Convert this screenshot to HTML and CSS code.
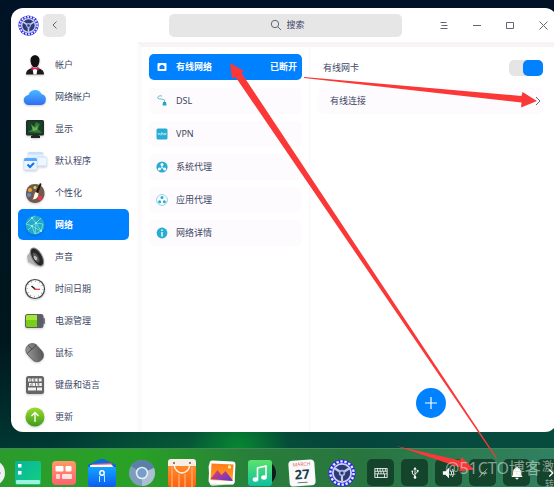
FILE: index.html
```html
<!DOCTYPE html>
<html lang="zh-CN">
<head>
<meta charset="utf-8">
<meta name="viewport" content="width=device-width, initial-scale=1">
<title>控制中心</title>
<link rel="stylesheet" href="styles.css">
</head>
<body>
<svg class="defs" aria-hidden="true">
  <defs>
    <linearGradient id="cloud" x1="0" y1="0" x2="0" y2="1"><stop offset="0" stop-color="#49b9ff"/><stop offset="1" stop-color="#2f6df5"/></linearGradient>
    <linearGradient id="grey" x1="0" y1="0" x2="1" y2="1"><stop offset="0" stop-color="#a2a2a2"/><stop offset="1" stop-color="#4c4c4c"/></linearGradient>
    <linearGradient id="lime" x1="0" y1="0" x2="0" y2="1"><stop offset="0" stop-color="#9bdc2c"/><stop offset="1" stop-color="#3f9a1c"/></linearGradient>
    <linearGradient id="teal" x1="0" y1="0" x2="1" y2="1"><stop offset="0" stop-color="#08b3a0"/><stop offset="1" stop-color="#14d07c"/></linearGradient>
    <linearGradient id="coral" x1="0" y1="0" x2="0" y2="1"><stop offset="0" stop-color="#ff9a68"/><stop offset="1" stop-color="#ff6170"/></linearGradient>
    <linearGradient id="folder" x1="0" y1="0" x2="0" y2="1"><stop offset="0" stop-color="#12a4ff"/><stop offset="1" stop-color="#0a5cf0"/></linearGradient>
    <linearGradient id="music" x1="0" y1="0" x2="0" y2="1"><stop offset="0" stop-color="#5be36a"/><stop offset="1" stop-color="#10bfa0"/></linearGradient>
    <linearGradient id="sunset" x1="0" y1="0" x2="0" y2="1"><stop offset="0" stop-color="#ff7a1c"/><stop offset="1" stop-color="#ffa321"/></linearGradient>
    <linearGradient id="hills" x1="0" y1="0" x2="1" y2="1"><stop offset="0" stop-color="#f03d62"/><stop offset="1" stop-color="#5a35d8"/></linearGradient>
    <linearGradient id="bag" x1="0" y1="0" x2="0" y2="1"><stop offset="0" stop-color="#ff8a2a"/><stop offset="1" stop-color="#fb6312"/></linearGradient>
    <symbol id="gear" viewBox="0 0 28 28">
      <circle cx="14" cy="14" r="13.5" fill="#2a27e0"/>
      <circle cx="14" cy="14" r="11.6" fill="none" stroke="#e6e8ff" stroke-width="2.4" stroke-dasharray="2.4 1.65"/>
      <circle cx="14" cy="14" r="10" fill="#cfd4ee"/>
      <circle cx="14" cy="14" r="8.2" fill="#2c3a78"/>
      <path d="M14 14L7 9.500M14 14l7-4.500M14 14v8.500" stroke="#c4cbea" stroke-width="2.200"/>
      <circle cx="14" cy="14" r="3.200" fill="#aab4dd"/>
      <circle cx="14" cy="14" r="1.600" fill="#27336c"/>
    </symbol>
  </defs>
</svg>

<main class="window">
  <header class="titlebar">
    <div class="brand">
      <svg class="brand-logo" aria-hidden="true"><use href="#gear"/></svg>
      <button class="back" type="button" aria-label="返回"><svg width="12" height="12" viewBox="0 0 12 12"><path class="line" d="M7.500 2.500L4 6l3.500 3.500"/></svg></button>
    </div>
    <label class="search">
      <svg width="12" height="12" viewBox="0 0 12 12" aria-hidden="true"><circle class="line" cx="5" cy="5" r="3.700"/><path class="line" d="M7.700 7.700L11 11"/></svg>
      <input type="search" placeholder="搜索" aria-label="搜索">
    </label>
    <div class="controls">
      <button type="button" aria-label="菜单"><svg width="12" height="12" viewBox="0 0 12 12"><path class="line" d="M2.500 3.500h6M3.500 6.500h6M2.500 9.500h7"/></svg></button>
      <button type="button" aria-label="最小化"><svg width="12" height="12" viewBox="0 0 12 12"><path class="line" d="M2 6.500h8"/></svg></button>
      <button type="button" aria-label="最大化"><svg width="12" height="12" viewBox="0 0 12 12"><path class="line" d="M2.500 3.500h7v6h-7z"/></svg></button>
      <button type="button" aria-label="关闭"><svg width="12" height="12" viewBox="0 0 12 12"><path class="line" d="M2.500 2.500l8 8M10.500 2.500l-8 8"/></svg></button>
    </div>
  </header>

  <div class="content">
    <nav class="sidebar" aria-label="设置">
      <a href="#account"><svg viewBox="0 0 24 24"><path d="M3 21.500c0-5 4-6.500 9-6.500s9 1.500 9 6.500z" fill="#1b1b1d"/><path d="M9.500 15.500h5L13.500 21.500h-3z" fill="#fff"/><path d="M8.500 13.500l3.500 2 3.500-2v4L12 16l-3.500 1.500z" fill="#e01d5c"/><path d="M7.500 7c0-6.500 9-6.500 9 0 0 4-2 7.500-4.500 7.500S7.500 11 7.500 7z" fill="#111"/></svg>帐户</a>
      <a href="#cloud-account"><svg viewBox="0 0 24 24"><path d="M6 20a5 5 0 0 1-.500-10A7 7 0 0 1 18.500 9 5.600 5.600 0 0 1 18 20z" fill="url(#cloud)"/></svg>网络帐户</a>
      <a href="#display"><svg viewBox="0 0 24 24"><path d="M8 21h9v-2l-2-1h-5l-2 1z" fill="#222"/><rect x="3" y="3" width="18" height="15.500" rx="1.500" fill="#222c26"/><rect x="4.500" y="4.500" width="15" height="12.500" fill="#17422a"/><path d="M5 15C9 13 11 10 13 5l4 2-2 5 4 4z" fill="#2f7a36"/><path d="M8 7l4 4 3-3-1 5-4 1z" fill="#8dc65a" opacity=".7"/></svg>显示</a>
      <a href="#default-apps"><svg viewBox="0 0 24 24"><rect x="5" y="3" width="15" height="11" rx="1.500" fill="#e3f0ff"/><path d="M5 5.500V4q0-1 1-1h13q1 0 1 1v1.500z" fill="#c7e0fc"/><rect x="14" y="8" width="10" height="9" rx="1.500" fill="#eef6ff" stroke="#c7e0fc"/><rect x="1" y="9" width="13" height="12" rx="1.500" fill="#e9f4ff" stroke="#c4dffc" stroke-width=".6"/><path d="M1 12v-1.500Q1 9 2.500 9h10Q14 9 14 10.500V12z" fill="#55a8fb"/><path d="M4.500 15.500l2.500 2.500 4-4" fill="none" stroke="#1473e8" stroke-width="2"/></svg>默认程序</a>
      <a href="#personal"><svg viewBox="0 0 24 24"><path d="M12 3c6 0 9.500 4 9.500 9.500S17 22 12 22s-9.500-4-9-10C3.500 6 7 3 12 3z" fill="#745849"/><circle cx="7" cy="9" r="2" fill="#efa332"/><circle cx="6" cy="14" r="2" fill="#4897df"/><circle cx="17" cy="17" r="2.300" fill="#e83848"/><circle cx="12" cy="6.500" r="1.500" fill="#d0dc61"/><path d="M17 2l1.500 1L15 12l-2-1z" fill="#181512"/><path d="M12.500 11l3 1.500c0 3-2 6-6 6 2-2 1-5 3-7.500z" fill="#fff8ee"/></svg>个性化</a>
      <a class="selected" href="#network" aria-current="page"><svg viewBox="0 0 24 24"><circle cx="12" cy="12" r="9.500" fill="#25a8cd"/><path d="M3 11l6-6 4 5 5-5M3 11l6 2 4-3 7 1M5 17l4-4 3 8 1-11 5 8-9-5M12 3L9 5M20 11l-2 7-6 3" fill="none" stroke="#7ee6d6" stroke-width=".8"/><g fill="#a9f6e6"><circle cx="9" cy="5" r="1"/><circle cx="9" cy="13" r="1"/><circle cx="13" cy="10" r="1"/><circle cx="18" cy="18" r="1"/></g></svg>网络</a>
      <a href="#sound"><svg viewBox="0 0 24 24"><path d="M4 11l6-8 9 17-6 1-8-4z" fill="#b3b3b3"/><ellipse cx="14" cy="12" rx="5" ry="10" transform="rotate(-30 14 12)" fill="#262626" stroke="#888"/><ellipse cx="13" cy="12.500" rx="2.500" ry="5.500" transform="rotate(-30 13 12.500)" fill="#555"/><ellipse cx="12.500" cy="13" rx="1.500" ry="2.500" transform="rotate(-30 12.500 13)" fill="#bbb"/></svg>声音</a>
      <a href="#time"><svg viewBox="0 0 24 24"><circle cx="12" cy="12" r="9.500" fill="#fcfcfc" stroke="#444" stroke-width="1.200"/><circle cx="12" cy="12" r="7.700" fill="none" stroke="#777" stroke-width="1.300" stroke-dasharray=".6 3.430"/><path d="M12 12L8.500 9M12 12l-1-1" stroke="#222" stroke-width="1.600"/><path d="M11 12.300h6" stroke="#e33532" stroke-width="1.200"/></svg>时间日期</a>
      <a href="#power"><svg viewBox="0 0 24 24"><rect x="19" y="9" width="3" height="6" rx="1" fill="#777"/><rect x="2" y="5" width="18.500" height="14" rx="2.500" fill="#595f62"/><path d="M4.500 6H14v12H4.500Q3 18 3 16.500v-9Q3 6 4.500 6z" fill="#79cf16"/><path d="M4.500 6H14v5H3V7.500Q3 6 4.500 6z" fill="#a3e638"/></svg>电源管理</a>
      <a href="#mouse"><svg viewBox="0 0 24 24"><rect x="5.500" y="1.500" width="13" height="20" rx="6.500" transform="rotate(-42 12 12)" fill="url(#grey)" stroke="#555" stroke-width=".7"/><path d="M4 12.500l9.500-8.500M5.500 4.500l3.500 4" stroke="#3f3f3f" stroke-width=".8"/></svg>鼠标</a>
      <a href="#keyboard"><svg viewBox="0 0 24 24"><rect x="3" y="3" width="18" height="18" rx="2.500" fill="#666"/><g fill="none" stroke="#f2f2f2" stroke-width="3"><path d="M5 7h14" stroke-dasharray="2.800 .8"/><path d="M6 11.500h13" stroke-dasharray="2.600 .8"/><path d="M5 16h8m1 0h5"/></g><path d="M6 7h1M10 7h1M14 7h1M7 12h1M14 11h1" stroke="#777"/></svg>键盘和语言</a>
      <a href="#update"><svg viewBox="0 0 24 24"><circle cx="12" cy="12" r="9.500" fill="url(#lime)"/><path d="M12 17V7.500M8.500 11L12 7.500l3.500 3.500" fill="none" stroke="#fff" stroke-width="1.300"/></svg>更新</a>
    </nav>

    <div class="panels">
      <nav class="network-list" aria-label="网络">
        <a class="selected" href="#wired" aria-current="page"><svg viewBox="0 0 12 12"><rect x="1.500" y="2" width="9" height="8" rx="1" fill="#fff"/><path d="M3.500 8V5.500q0-.500 .5-.5h.5V4h3v1h.5q.5 0 .5 .5V8z" fill="#0081ff"/></svg>有线网络<span class="state">已断开</span></a>
        <a href="#dsl"><svg viewBox="0 0 12 12"><path d="M6 1C3 0 .5 2.500 2 3.500S7 3.500 8.500 5v2" fill="none" stroke="#62bfcd"/><path d="M7 7h3l.5 3.500h-4z" fill="#21a5c1"/></svg>DSL</a>
        <a href="#vpn"><svg viewBox="0 0 12 12"><rect x=".5" y=".5" width="11" height="11" rx="1.500" fill="#27acd2"/><path d="M2 5l.8 2L3.600 5M5 7.500V5h1.500v1.200H5M8 7.500V5l1.800 2V4.800" fill="none" stroke="#d9f6ff" stroke-width=".7"/></svg>VPN</a>
        <a href="#system-proxy"><svg viewBox="0 0 12 12"><circle cx="6" cy="6" r="5.600" fill="#27acd2"/><path d="M6 4v2.500L3.500 8M6 6.500L8.500 8" stroke="#fff" fill="none"/><g fill="#fff"><circle cx="6" cy="3.500" r="1.500"/><circle cx="3.300" cy="8" r="1.500"/><circle cx="8.700" cy="8" r="1.500"/></g></svg>系统代理</a>
        <a href="#app-proxy"><svg viewBox="0 0 12 12"><circle cx="6" cy="6" r="5.400" fill="#fff" stroke="#70c8df" stroke-width=".8"/><g fill="#27acd2"><circle cx="6" cy="3.600" r="1.500"/><circle cx="3.600" cy="7.800" r="1.500"/><circle cx="8.400" cy="7.800" r="1.500"/></g></svg>应用代理</a>
        <a href="#details"><svg viewBox="0 0 12 12"><circle cx="6" cy="6" r="5.400" fill="#27acd2"/><path d="M6 2.500v1.500M6 5v4.500" stroke="#fff" stroke-width="1.400"/></svg>网络详情</a>
      </nav>

      <section class="detail">
        <div class="adapter">
          <label for="wired-toggle">有线网卡</label>
          <input class="toggle" id="wired-toggle" type="checkbox" role="switch" checked>
        </div>
        <a class="connection" href="#connection">有线连接<svg width="10" height="12" viewBox="0 0 10 12"><path class="line" d="M3 2L7 6 3 10"/></svg></a>
        <button class="add" type="button" aria-label="添加"><svg width="14" height="14" viewBox="0 0 14 14"><path d="M7 1v12M1 7h12" stroke="#fff" stroke-width="1.200"/></svg></button>
      </section>
    </div>
  </div>
</main>

<footer class="dock">
  <div class="dock-group compact">
    <button type="button" aria-label="启动器"><svg viewBox="0 0 28 28"><circle cx="14" cy="14" r="13" fill="#eef0f2"/><circle cx="21" cy="14" r="1.500" fill="#777"/></svg></button>
    <button type="button" aria-label="桌面"><svg viewBox="0 0 28 28"><rect x="1" y="2" width="26" height="24" rx="2" fill="url(#teal)"/><path d="M4 5h3.500v3.500H4zM4 12h3.500v3.500H4z" fill="#fff"/><rect x="2" y="21" width="24" height="4" rx="1" fill="#9cf1df"/></svg></button>
    <button type="button" aria-label="多任务视图"><svg viewBox="0 0 28 28"><rect x="2" y="2" width="24" height="24" rx="4" fill="url(#coral)"/><g fill="#fff"><rect x="5.500" y="7" width="8" height="5.500" rx="1"/><rect x="15.500" y="7" width="6" height="5.500" rx="1"/><rect x="6" y="15" width="4" height="5" rx="1" opacity=".7"/><rect x="12" y="15" width="10" height="5" rx="1" opacity=".8"/></g></svg></button>
  </div>
  <i class="divider"></i>
  <div class="dock-group">
    <button type="button" aria-label="文件管理器"><svg viewBox="0 0 28 28"><path d="M0 6L12 0q2-1 4 0l12 6v4H0z" fill="#096bd9"/><path d="M4 5l19-1 3 4H4z" fill="#f35b72"/><path d="M2 7q0-1 1-1l20-.500q1 0 2 2.500H2z" fill="#f8fbff"/><path d="M0 8h28v17q0 3-3 3H3q-3 0-3-3z" fill="url(#folder)"/><circle cx="14" cy="14" r="2.200" fill="none" stroke="#fff" stroke-width="1.500"/><path d="M11.500 17v6M16.500 16v7" stroke="#c8e5ff" stroke-width="1"/></svg></button>
    <button type="button" aria-label="浏览器"><svg viewBox="0 0 28 28"><circle cx="14" cy="14" r="13" fill="#7e9dbb"/><path d="M14 14L3 7a13 13 0 0 1 23 2z" fill="#5b7fa8"/><path d="M14 14l12-5a13 13 0 0 1-12 18z" fill="#a9c1d3"/><circle cx="14" cy="14" r="6.300" fill="#e3edf5"/><circle cx="14" cy="14" r="4.700" fill="#789dc9"/></svg></button>
    <button type="button" aria-label="应用商店"><svg viewBox="0 0 28 28"><path d="M0 3q0-3 3-3h22q3 0 3 3v6H0z" fill="#f8eee5"/><path d="M0 7h28v18q0 3-3 3H3q-3 0-3-3z" fill="url(#bag)"/><path d="M4 8v20M11 15v13M17 15v13M24 8v20" stroke="#ffa565" stroke-width="1.500"/><path d="M6 5c1 12 15 12 16 0" fill="none" stroke="#fff3df" stroke-width="1.500"/><path d="M5 4h2M21 4h2" stroke="#705543" stroke-width="1.500"/></svg></button>
    <button type="button" aria-label="相册"><svg viewBox="0 0 28 28"><rect x="1" y="4" width="25" height="22" rx="3" transform="rotate(-4 14 14)" fill="#e6e6e6"/><rect x="1" y="2" width="26" height="23" rx="3" transform="rotate(3 14 14)" fill="#fff"/><path d="M3.500 4.500l22 1-1 16.500-22-1z" fill="url(#sunset)"/><path d="M2.500 20l7-9 4 5 4-4 7 9v1z" fill="url(#hills)"/><circle cx="21.500" cy="8" r="1.700" fill="#ffef91"/></svg></button>
    <button type="button" aria-label="音乐"><svg viewBox="0 0 28 28"><circle cx="16" cy="14" r="12" fill="#111d1c"/><rect x="0" y="1" width="24" height="26" rx="3" fill="url(#music)"/><path d="M9.500 20V9l8.500-2v11" fill="none" stroke="#fff" stroke-width="1.600"/><ellipse cx="7.500" cy="20.500" rx="2.800" ry="2.200" fill="#fff"/><ellipse cx="16" cy="18.500" rx="2.800" ry="2.200" fill="#fff"/></svg></button>
    <button class="calendar" type="button"><small>MARCH</small><b>27</b><i></i></button>
    <button type="button" aria-label="控制中心"><svg><use href="#gear"/></svg></button>
  </div>
  <i class="divider"></i>
  <div class="tray">
    <button type="button" aria-label="键盘"><svg viewBox="0 0 16 16"><rect x="1" y="3" width="14" height="10" fill="none" stroke="#fff"/><path d="M1 6h14M1 9h14M4 3v3M7 3v3M10 3v3M13 3v3M5 6v3M8 6v3M11 6v3M4 9v4M12 9v4" stroke="#fff" stroke-width=".9"/></svg></button>
    <button type="button" aria-label="USB"><svg viewBox="0 0 16 16"><path d="M8 3v10M8 11L5 9V6M8 9l3-2V5" fill="none" stroke="#fff"/><path d="M8 1l2 3H6z" fill="#fff"/><circle cx="8" cy="13" r="1.500" fill="#fff"/><circle cx="5" cy="6" r="1" fill="#fff"/><path d="M10 4.500h2v2h-2z" fill="#fff"/></svg></button>
    <button type="button" aria-label="音量"><svg viewBox="0 0 16 16"><path d="M1 6h3l4-4v12l-4-4H1z" fill="#fff"/><path d="M10 5q2 3 0 6M12 3.500q3 4.500 0 9" fill="none" stroke="#fff"/></svg></button>
    <button type="button" aria-label="网络断开"><svg viewBox="0 0 16 16"><path d="M3 13L13 3M5 12l2-5M9 11l2-5" stroke="#8ca796" fill="none"/></svg></button>
    <button type="button" aria-label="通知"><svg viewBox="0 0 16 16"><path d="M8 1q1.200 0 1.200 1.300C12 3 12.500 5 12.500 7v3l2 2.500h-13l2-2.500V7c0-2 .5-4 3.300-4.700Q6.800 1 8 1zM6 13.500h4q-.5 2-2 2t-2-2z" fill="#fff"/></svg></button>
    <button type="button" aria-label="更多"><svg viewBox="0 0 16 16"><path d="M6 4l4 4-4 4" fill="none" stroke="#fff" stroke-width="1.500"/></svg></button>
  </div>
</footer>

<svg class="arrows" viewBox="0 0 554 487" aria-hidden="true">
  <path d="M230 63l14 8-2.500 2L497 458l-1 .5L235.500 77l-3.500 1.500z"/>
  <path d="M304 77l217.500 19 1-4 14.500 9-16 6.500 .5-5L304 78z"/>
  <path d="M396.500 446l64 14.500 1-3.500 12.500 12.500-15 2 1-4z"/>
</svg>
<div class="watermark">@51CTO博客</div>
<div class="activation">激<br><small>转</small></div>
</body>
</html>
```
FILE: styles.css
```css
* {
  box-sizing: border-box;
}

body {
  position: relative;
  display: flex;
  flex-direction: column;
  height: 100vh;
  margin: 0;
  overflow: hidden;
  color: #3d4665;
  font: 10px/16px "Noto Sans", "Noto Sans CJK SC", sans-serif;
  background:
    radial-gradient(ellipse 50px 40px at 43% 92%, #078832, transparent),
    radial-gradient(ellipse 150px 50px at 36% 93%, #075d37, transparent),
    linear-gradient(90deg, transparent, #074b3f 85%) 0 100% / 100% 60px no-repeat,
    linear-gradient(#001326, #00171e 70%, #003733 92%);
}

button {
  display: grid;
  place-items: center;
  padding: 0;
  border: 0;
  background: none;
  font: inherit;
}

a {
  color: inherit;
  text-decoration: none;
}

.defs {
  position: absolute;
  width: 0;
  height: 0;
}

.line {
  fill: none;
  stroke: #626575;
}

.window {
  display: flex;
  flex: 1;
  flex-direction: column;
  min-height: 0;
  margin: 8px -3px 16px 11px;
  overflow: hidden;
  border-radius: 12px;
  background: #fff;
}

.titlebar {
  display: grid;
  grid-template-columns: 158px 1fr auto;
  align-items: center;
  height: 34px;
}

.brand {
  display: flex;
  gap: 4px;
  align-items: center;
  padding-left: 7px;
}

.brand-logo {
  width: 21px;
  height: 21px;
}

.back {
  width: 23px;
  height: 23px;
  border-radius: 5px;
  background: #e7e7e7;
}

.search {
  display: flex;
  gap: 5px;
  align-items: center;
  justify-content: center;
  height: 23px;
  margin-right: 27px;
  padding-left: 5px;
  border-radius: 5px;
  background: #e6e6e6;
}

.search input {
  min-width: 20px;
  padding: 0;
  border: 0;
  outline: 0;
  appearance: none;
  background: none;
  color: inherit;
  font: 9px/16px "Noto Sans", "Noto Sans CJK SC", sans-serif;
  field-sizing: content;
}

.search input::placeholder {
  color: #3d4665;
  opacity: 1;
}

.controls {
  display: flex;
  gap: 4px;
}

.controls button {
  width: 29px;
  height: 23px;
}

.content {
  display: grid;
  flex: 1;
  grid-template-columns: 126px 1fr;
  min-height: 0;
}

.sidebar {
  display: flex;
  flex-direction: column;
  gap: 1px;
  padding: 7px 8px 0 7px;
}

.sidebar a {
  display: flex;
  flex: none;
  gap: 8px;
  align-items: center;
  height: 31px;
  padding-left: 5px;
  border-radius: 5px;
  font-size: 9px;
}

.sidebar svg {
  width: 24px;
  height: 24px;
  filter: drop-shadow(0 1px 1px #0003);
}

.sidebar .selected,
.network-list .selected {
  background: #0081ff;
  color: #fff;
  font-weight: 600;
}

.panels {
  display: grid;
  grid-template-columns: 168px 1fr;
  border-top: 5px solid #f7f3f7;
  border-left: 5px solid #fdfafd;
}

.network-list {
  display: flex;
  flex-direction: column;
  gap: 7px;
  padding: 7px 7px 0;
  border-right: 1px solid #faf7fa;
}

.network-list a {
  display: flex;
  gap: 8px;
  align-items: center;
  height: 26px;
  padding: 0 5px 0 7px;
  border-radius: 5px;
  background: #fefbfe;
  font-size: 9px;
}

.network-list .selected {
  margin-bottom: 1px;
}

.network-list svg {
  width: 12px;
  height: 12px;
}

.state {
  margin-left: auto;
}

.detail {
  display: flex;
  flex-direction: column;
  padding: 8px 14px 14px 8px;
  font-size: 9px;
}

.adapter {
  display: flex;
  align-items: center;
  justify-content: space-between;
  height: 26px;
  padding-left: 5px;
}

.toggle {
  width: 34px;
  height: 16px;
  margin: 0;
  border-radius: 5px;
  appearance: none;
  background: #e5e5e5;
}

.toggle::before {
  display: block;
  width: 20px;
  height: 16px;
  border-radius: 5px;
  background: #0081ff;
  content: "";
}

.toggle:checked::before {
  margin-left: auto;
}

.connection {
  display: flex;
  align-items: center;
  justify-content: space-between;
  height: 26px;
  margin-top: 7px;
  padding-left: 12px;
  border-radius: 5px;
  background: #fefbfe;
}

.add {
  width: 30px;
  height: 30px;
  margin: auto auto 0;
  border-radius: 50%;
  background: #0081ff;
}

.dock {
  display: flex;
  flex: none;
  align-items: center;
  height: 39px;
  padding-top: 9px;
  border-top: 1px solid #43885c;
  background: linear-gradient(90deg, #2c9b2d, #28a125 25%, #287f3a 45%, #29753f 65%, #308163);
}

.dock-group {
  display: flex;
}

.dock-group button {
  width: 40px;
  height: 28px;
}

.dock-group.compact {
  margin-left: -26px;
}

.compact button {
  width: 36px;
}

.dock-group svg {
  width: 28px;
  height: 28px;
}

.divider {
  width: 1px;
  height: 21px;
  background: #17482d;
}

.dock .calendar {
  display: flex;
  flex-direction: column;
  align-items: center;
  width: 26px;
  height: 26px;
  margin: 1px 7px;
  border-radius: 4px;
  background: #fafafa;
  transform: rotate(-4deg);
}

.calendar small {
  color: #e36a62;
  font-size: 5px;
  line-height: 8px;
}

.calendar b {
  color: #203b4c;
  font-size: 13px;
  line-height: 12px;
}

.calendar i {
  width: 10px;
  height: 1px;
  margin-top: 2px;
  background: #777;
}

.tray {
  display: flex;
  gap: 7px;
  margin-left: 5px;
}

.tray button {
  width: 27px;
  height: 27px;
  border-radius: 5px;
  background: #14442c;
}

.tray svg {
  width: 14px;
  height: 14px;
}

.arrows {
  position: absolute;
  top: 0;
  left: 0;
  width: 554px;
  height: 487px;
  fill: #fb3838;
  pointer-events: none;
}

.watermark,
.activation {
  position: absolute;
  color: #d5ddd99c;
  white-space: nowrap;
  pointer-events: none;
}

.watermark {
  top: 458px;
  left: 445px;
  font-size: 16px;
  line-height: 20px;
}

.activation {
  top: 459px;
  right: 0;
  font-size: 12px;
  line-height: 16px;
  text-align: right;
}

.activation small {
  font-size: 9px;
  line-height: 12px;
}
```
